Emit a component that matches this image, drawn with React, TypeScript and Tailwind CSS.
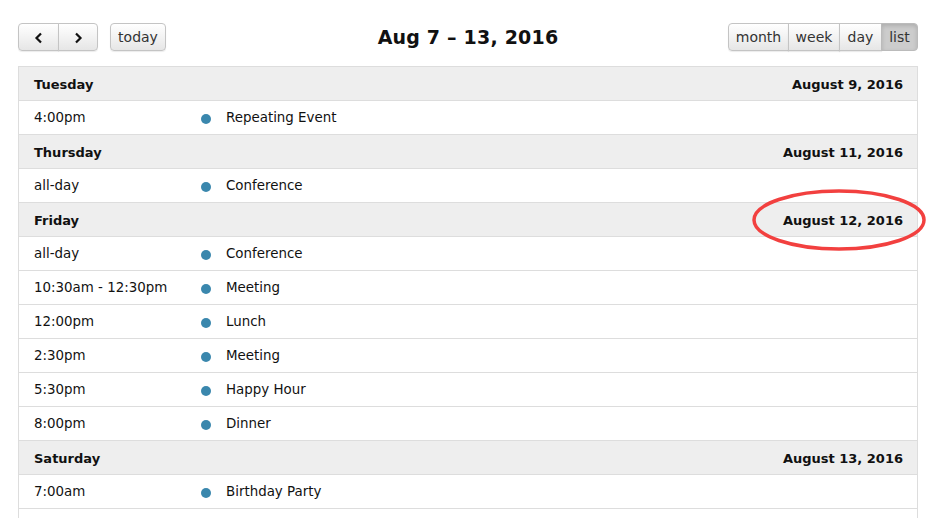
import { ReactNode } from "react";

type Item = { time: string; title: string };
type Day = { name: string; date: string; items: Item[] };

const days: Day[] = [
  { name: "Tuesday", date: "August 9, 2016", items: [{ time: "4:00pm", title: "Repeating Event" }] },
  { name: "Thursday", date: "August 11, 2016", items: [{ time: "all-day", title: "Conference" }] },
  {
    name: "Friday",
    date: "August 12, 2016",
    items: [
      { time: "all-day", title: "Conference" },
      { time: "10:30am - 12:30pm", title: "Meeting" },
      { time: "12:00pm", title: "Lunch" },
      { time: "2:30pm", title: "Meeting" },
      { time: "5:30pm", title: "Happy Hour" },
      { time: "8:00pm", title: "Dinner" },
    ],
  },
  {
    name: "Saturday",
    date: "August 13, 2016",
    items: [
      { time: "7:00am", title: "Birthday Party" },
      { time: "", title: "" },
    ],
  },
];

const Btn = ({ children, className = "" }: { children: ReactNode; className?: string }) => (
  <button
    className={`h-[28px] pt-px flex items-center justify-center text-[14px] text-[#333] border border-[#c4c4c4] bg-gradient-to-b from-white to-[#e6e6e6] shadow-[0_1px_1px_rgba(0,0,0,0.08)] ${className}`}
  >
    {children}
  </button>
);

const Chevron = ({ left }: { left?: boolean }) => (
  <svg width="10" height="12" viewBox="0 0 10 12">
    <polyline
      points={left ? "7,1.5 2.5,6 7,10.5" : "3,1.5 7.5,6 3,10.5"}
      fill="none"
      stroke="#111"
      strokeWidth="2.2"
    />
  </svg>
);

export default function App() {
  return (
    <div className="w-[936px] h-[518px] overflow-hidden bg-white relative font-['DejaVu_Sans',sans-serif] text-[#111]">
      <div className="px-[18px] pt-[23px]">
        <div className="relative flex items-center justify-between h-[28px] mb-[15px]">
          <div className="flex items-center gap-[12px]">
            <div className="flex">
              <Btn className="w-[41px] rounded-l-[4px]">
                <Chevron left />
              </Btn>
              <Btn className="w-[40px] rounded-r-[4px] -ml-px">
                <Chevron />
              </Btn>
            </div>
            <Btn className="w-[56px] rounded-[4px]">today</Btn>
          </div>
          <h2 className="absolute left-1/2 -translate-x-1/2 top-[0px] text-[19px] font-bold tracking-[0.2px] whitespace-nowrap">
            Aug 7 – 13, 2016
          </h2>
          <div className="flex">
            <Btn className="w-[61px] rounded-l-[4px]">month</Btn>
            <Btn className="w-[52px] -ml-px">week</Btn>
            <Btn className="w-[43px] -ml-px">day</Btn>
            <button className="h-[28px] pt-px w-[37px] -ml-px rounded-r-[4px] text-[14px] text-[#333] border border-[#bbb] bg-[#ccc] shadow-[inset_0_2px_4px_rgba(0,0,0,0.15)]">
              list
            </button>
          </div>
        </div>

        <div className="border-x border-t border-[#ddd] text-[13.4px]">
          {days.map((d) => (
            <div key={d.name}>
              <div className="h-[34px] pt-[2px] flex items-center justify-between pl-[15px] pr-[14px] bg-[#eee] border-b border-[#ddd] font-bold text-[13px]">
                <span>{d.name}</span>
                <span>{d.date}</span>
              </div>
              {d.items.map((it, i) => (
                <div key={i} className="h-[34px] pt-[2px] flex items-center border-b border-[#ddd]">
                  <div className="w-[168px] pl-[15px] whitespace-nowrap">{it.time}</div>
                  <div className="w-[39px] pl-[14px]">
                    {it.title && <div className="w-[10px] h-[10px] rounded-full bg-[#3a87ad]" />}
                  </div>
                  <div>{it.title}</div>
                </div>
              ))}
            </div>
          ))}
        </div>
      </div>

      <svg className="absolute left-[750px] top-[188px] pointer-events-none" width="178" height="66" viewBox="0 0 178 66">
        <ellipse cx="89" cy="32" rx="85" ry="29" fill="none" stroke="#f2403f" strokeWidth="3.5" />
      </svg>
    </div>
  );
}
